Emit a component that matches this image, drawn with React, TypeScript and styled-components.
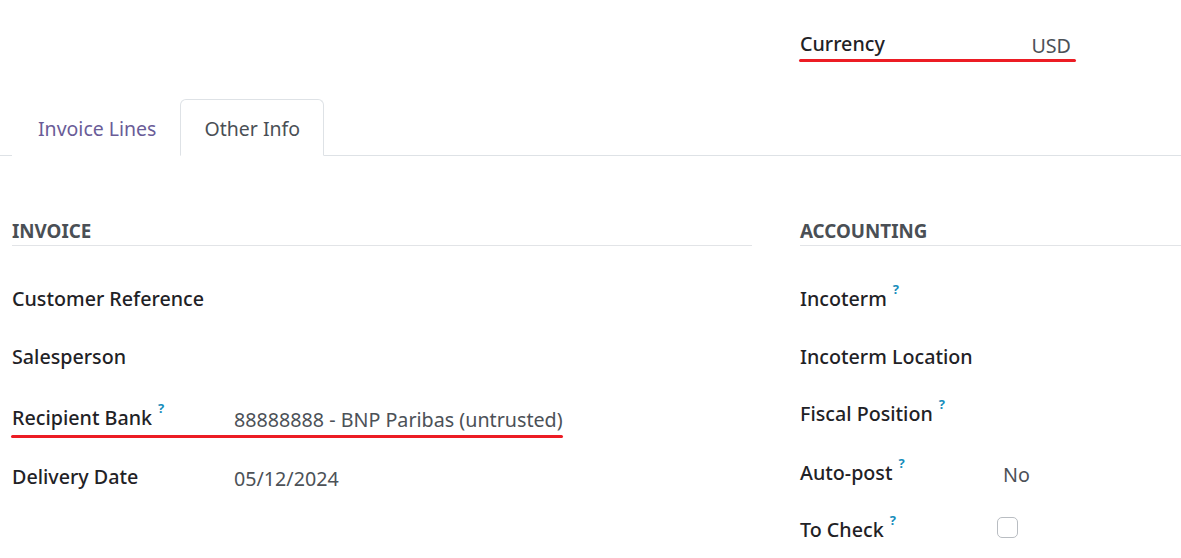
import React from "react";
import styled, { createGlobalStyle } from "styled-components";

const Global = createGlobalStyle`
  html, body { margin: 0; padding: 0; background: #ffffff; }
  body { font-family: "Noto Sans", "Open Sans", sans-serif; color: #212529; }
  * { box-sizing: border-box; }
`;

const Page = styled.div`
  width: 1181px;
  height: 558px;
  overflow: hidden;
  background: #fff;
`;

const Columns = styled.div`
  display: grid;
  grid-template-columns: 740px 1fr;
  column-gap: 48px;
  padding-left: 12px;
`;

const Header = styled(Columns)`
  height: 99px;
  padding-top: 28px;
  align-items: start;
`;

const Highlight = styled.div<{ $w: number }>`
  position: relative;
  width: ${(p) => p.$w}px;
  display: flex;
  align-items: center;
  &::after {
    content: "";
    position: absolute;
    left: -1px;
    right: -1px;
    bottom: -6px;
    height: 3px;
    border-radius: 2px;
    background: #ec1c24;
  }
`;

const CurrencyField = styled(Highlight)`
  justify-content: space-between;
  padding-right: 4px;
  &::after {
    bottom: -3px;
  }
`;

const TabBar = styled.div`
  display: flex;
  padding-left: 12px;
  border-bottom: 1px solid #dee2e6;
  height: 57px;
`;

const Tab = styled.div<{ $active?: boolean }>`
  height: 57px;
  padding: 2px 23px 0 23px;
  display: flex;
  align-items: center;
  font-size: 19.5px;
  color: ${(p) => (p.$active ? "#4a4f55" : "#6a5c98")};
  border: 1px solid ${(p) => (p.$active ? "#dee2e6" : "transparent")};
  border-bottom-color: ${(p) => (p.$active ? "#ffffff" : "transparent")};
  border-radius: 6px 6px 0 0;
  background: #fff;
  margin-bottom: -1px;
`;

const FirstTab = styled(Tab)`
  padding-left: 25px;
`;

const Body = styled(Columns)`
  padding-top: 62px;
`;

const Group = styled.div`
  display: flex;
  flex-direction: column;
`;

const GroupTitle = styled.div`
  font-size: 18.8px;
  font-weight: 700;
  line-height: 27px;
  color: #4a4f55;
  border-bottom: 1.5px solid #e2e4e7;
  margin-bottom: 23px;
`;

const Row = styled.div<{ $h: number; $labelW: number }>`
  display: grid;
  grid-template-columns: ${(p) => p.$labelW}px 1fr;
  align-items: center;
  height: ${(p) => p.$h}px;
`;

const Label = styled.div`
  font-size: 19.7px;
  font-weight: 500;
  color: #1f2226;
  white-space: nowrap;
`;

const Help = styled.sup`
  font-size: 13px;
  font-weight: 700;
  color: #178dbb;
  margin-left: 6px;
  position: relative;
  top: -4px;
`;

const Value = styled.div`
  font-size: 19.7px;
  color: #4c5157;
  padding-top: 4px;
  white-space: nowrap;
`;

const BankField = styled(Highlight)`
  grid-column: 1 / span 2;
  display: grid;
  grid-template-columns: 222px 1fr;
  &::after {
    bottom: -5px;
  }
`;

const Checkbox = styled.span`
  display: inline-block;
  width: 21px;
  height: 21px;
  border: 1px solid #b9bdc2;
  border-radius: 5px;
  margin-left: -6px;
  margin-top: 2px;
`;

const HelpLabel = ({ text }: { text: string }) => (
  <Label>
    {text}
    <Help>?</Help>
  </Label>
);

export default function App() {
  return (
    <Page>
      <Global />
      <Header>
        <div />
        <CurrencyField $w={275}>
          <Label>Currency</Label>
          <Value>USD</Value>
        </CurrencyField>
      </Header>
      <TabBar>
        <FirstTab>Invoice Lines</FirstTab>
        <Tab $active>Other Info</Tab>
      </TabBar>
      <Body>
        <Group>
          <GroupTitle>INVOICE</GroupTitle>
          <Row $h={58} $labelW={222}>
            <Label>Customer Reference</Label>
            <Value />
          </Row>
          <Row $h={58} $labelW={222}>
            <Label>Salesperson</Label>
            <Value />
          </Row>
          <Row $h={64} $labelW={222}>
            <BankField $w={550}>
              <HelpLabel text="Recipient Bank" />
              <Value>88888888 - BNP Paribas (untrusted)</Value>
            </BankField>
          </Row>
          <Row $h={54} $labelW={222}>
            <Label>Delivery Date</Label>
            <Value>05/12/2024</Value>
          </Row>
        </Group>
        <Group>
          <GroupTitle>ACCOUNTING</GroupTitle>
          <Row $h={58} $labelW={203}>
            <HelpLabel text="Incoterm" />
            <Value />
          </Row>
          <Row $h={58} $labelW={203}>
            <Label>Incoterm Location</Label>
            <Value />
          </Row>
          <Row $h={56} $labelW={203}>
            <HelpLabel text="Fiscal Position" />
            <Value />
          </Row>
          <Row $h={62} $labelW={203}>
            <HelpLabel text="Auto-post" />
            <Value>No</Value>
          </Row>
          <Row $h={52} $labelW={203}>
            <HelpLabel text="To Check" />
            <div>
              <Checkbox />
            </div>
          </Row>
        </Group>
      </Body>
    </Page>
  );
}
